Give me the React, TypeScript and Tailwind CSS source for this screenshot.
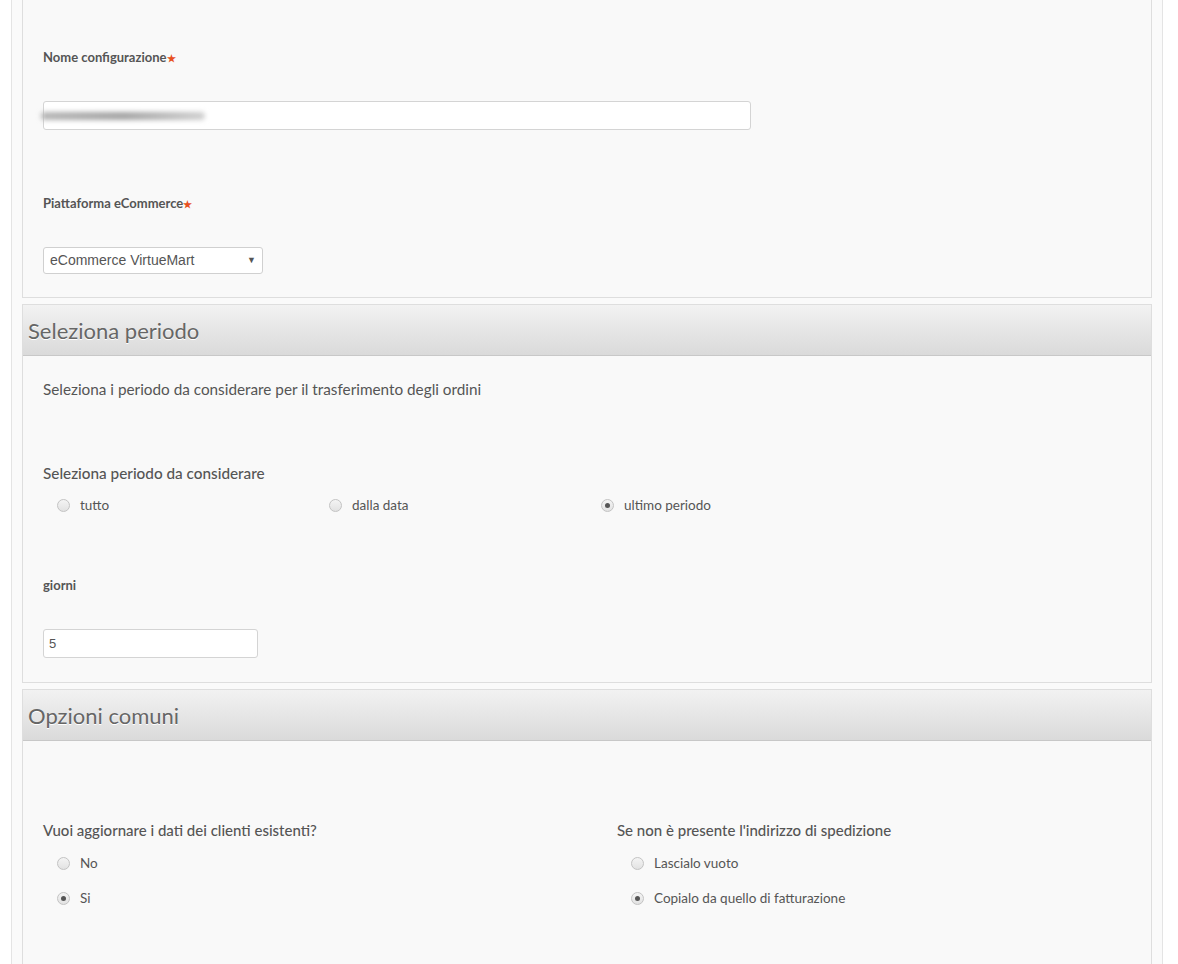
import React from 'react';

const lato = { fontFamily: 'Lato, "Open Sans", sans-serif' };

function Req() {
  return <span className="text-[10px] text-[#e8501f] align-baseline">★</span>;
}

function FieldLabel({ text, required }: { text: string; required?: boolean }) {
  return (
    <div className="h-[18px] text-[13px] leading-[18px] font-bold text-[#555]">
      {text}
      {required && <Req />}
    </div>
  );
}

function Radio({ label, checked }: { label: string; checked?: boolean }) {
  return (
    <label className="flex items-center h-[20px] pl-[14px] text-[13.5px] text-[#555]">
      <span className="w-[13px] h-[13px] rounded-full border border-[#c3c3c3] bg-gradient-to-b from-[#f4f4f4] to-[#e2e2e2] flex items-center justify-center">
        {checked && <span className="w-[5px] h-[5px] rounded-full bg-[#555]" />}
      </span>
      <span className="ml-[10px]">{label}</span>
    </label>
  );
}

function PanelHeader({ title }: { title: string }) {
  return (
    <div className="h-[51px] flex items-center pl-[5px] border-b border-[#c8c8c8] bg-gradient-to-b from-[#f2f2f2] to-[#dadada]">
      <h2 className="text-[22px] text-[#666] [text-shadow:0_1px_0_#fff]" style={lato}>
        {title}
      </h2>
    </div>
  );
}

export default function App() {
  return (
    <div className="min-h-screen bg-white" style={lato}>
      <div className="ml-[11px] w-[1152px] min-h-screen border-x border-[#e4e4e4] bg-[#fafafa] px-[10px]">
        {/* configurazione */}
        <div className="border-x border-b border-[#dedede] bg-[#f9f9f9] pt-[48px] px-[20px] pb-[23px]">
          <FieldLabel text="Nome configurazione" required />
          <div className="relative mt-[35px] h-[29px] w-[708px] rounded-[3px] border border-[#d4d4d4] bg-white">
            <div className="absolute left-[-3px] top-[10px] h-[8px] w-[164px] rounded-full bg-gradient-to-r from-[#b5b5b5] via-[#a2a2a2] to-[#cfcfcf] blur-[2.5px]" />
          </div>
          <div className="mt-[64px]">
            <FieldLabel text="Piattaforma eCommerce" required />
          </div>
          <div
            className="mt-[35px] h-[27px] w-[220px] rounded-[3px] border border-[#d0d0d0] bg-white flex items-center justify-between pl-[6px] pr-[6px] text-[14px] text-[#555]"
            style={{ fontFamily: '"Liberation Sans", Arial, sans-serif' }}
          >
            <span>eCommerce VirtueMart</span>
            <span className="text-[9px] text-[#555]">▼</span>
          </div>
        </div>

        {/* periodo */}
        <div className="mt-[6px] border border-[#dedede] bg-[#f9f9f9]">
          <PanelHeader title="Seleziona periodo" />
          <div className="px-[20px] pt-[23px] pb-[24px]">
            <p className="text-[15.3px] leading-[20px] text-[#555]">
              Seleziona i periodo da considerare per il trasferimento degli ordini
            </p>
            <div className="mt-[64px] text-[15.3px] leading-[20px] font-medium text-[#555]">
              Seleziona periodo da considerare
            </div>
            <div className="mt-[12px] flex">
              <div className="w-[272px]">
                <Radio label="tutto" />
              </div>
              <div className="w-[272px]">
                <Radio label="dalla data" />
              </div>
              <div className="w-[272px]">
                <Radio label="ultimo periodo" checked />
              </div>
            </div>
            <div className="mt-[61px]">
              <FieldLabel text="giorni" />
            </div>
            <div
              className="mt-[35px] h-[29px] w-[215px] rounded-[3px] border border-[#d4d4d4] bg-white flex items-center pl-[5px] text-[13px] text-[#555]"
              style={{ fontFamily: '"Liberation Sans", Arial, sans-serif' }}
            >
              5
            </div>
          </div>
        </div>

        {/* opzioni */}
        <div className="mt-[6px] border border-[#dedede] bg-[#f9f9f9] min-h-[400px]">
          <PanelHeader title="Opzioni comuni" />
          <div className="px-[20px] pt-[79px] pb-[60px] flex">
            <div className="w-[574px]">
              <div className="text-[15px] leading-[20px] font-medium text-[#555]">
                Vuoi aggiornare i dati dei clienti esistenti?
              </div>
              <div className="mt-[13px] flex flex-col gap-[15px]">
                <Radio label="No" />
                <Radio label="Si" checked />
              </div>
            </div>
            <div>
              <div className="text-[15px] leading-[20px] font-medium text-[#555]">
                Se non è presente l'indirizzo di spedizione
              </div>
              <div className="mt-[13px] flex flex-col gap-[15px]">
                <Radio label="Lascialo vuoto" />
                <Radio label="Copialo da quello di fatturazione" checked />
              </div>
            </div>
          </div>
        </div>
      </div>
    </div>
  );
}
